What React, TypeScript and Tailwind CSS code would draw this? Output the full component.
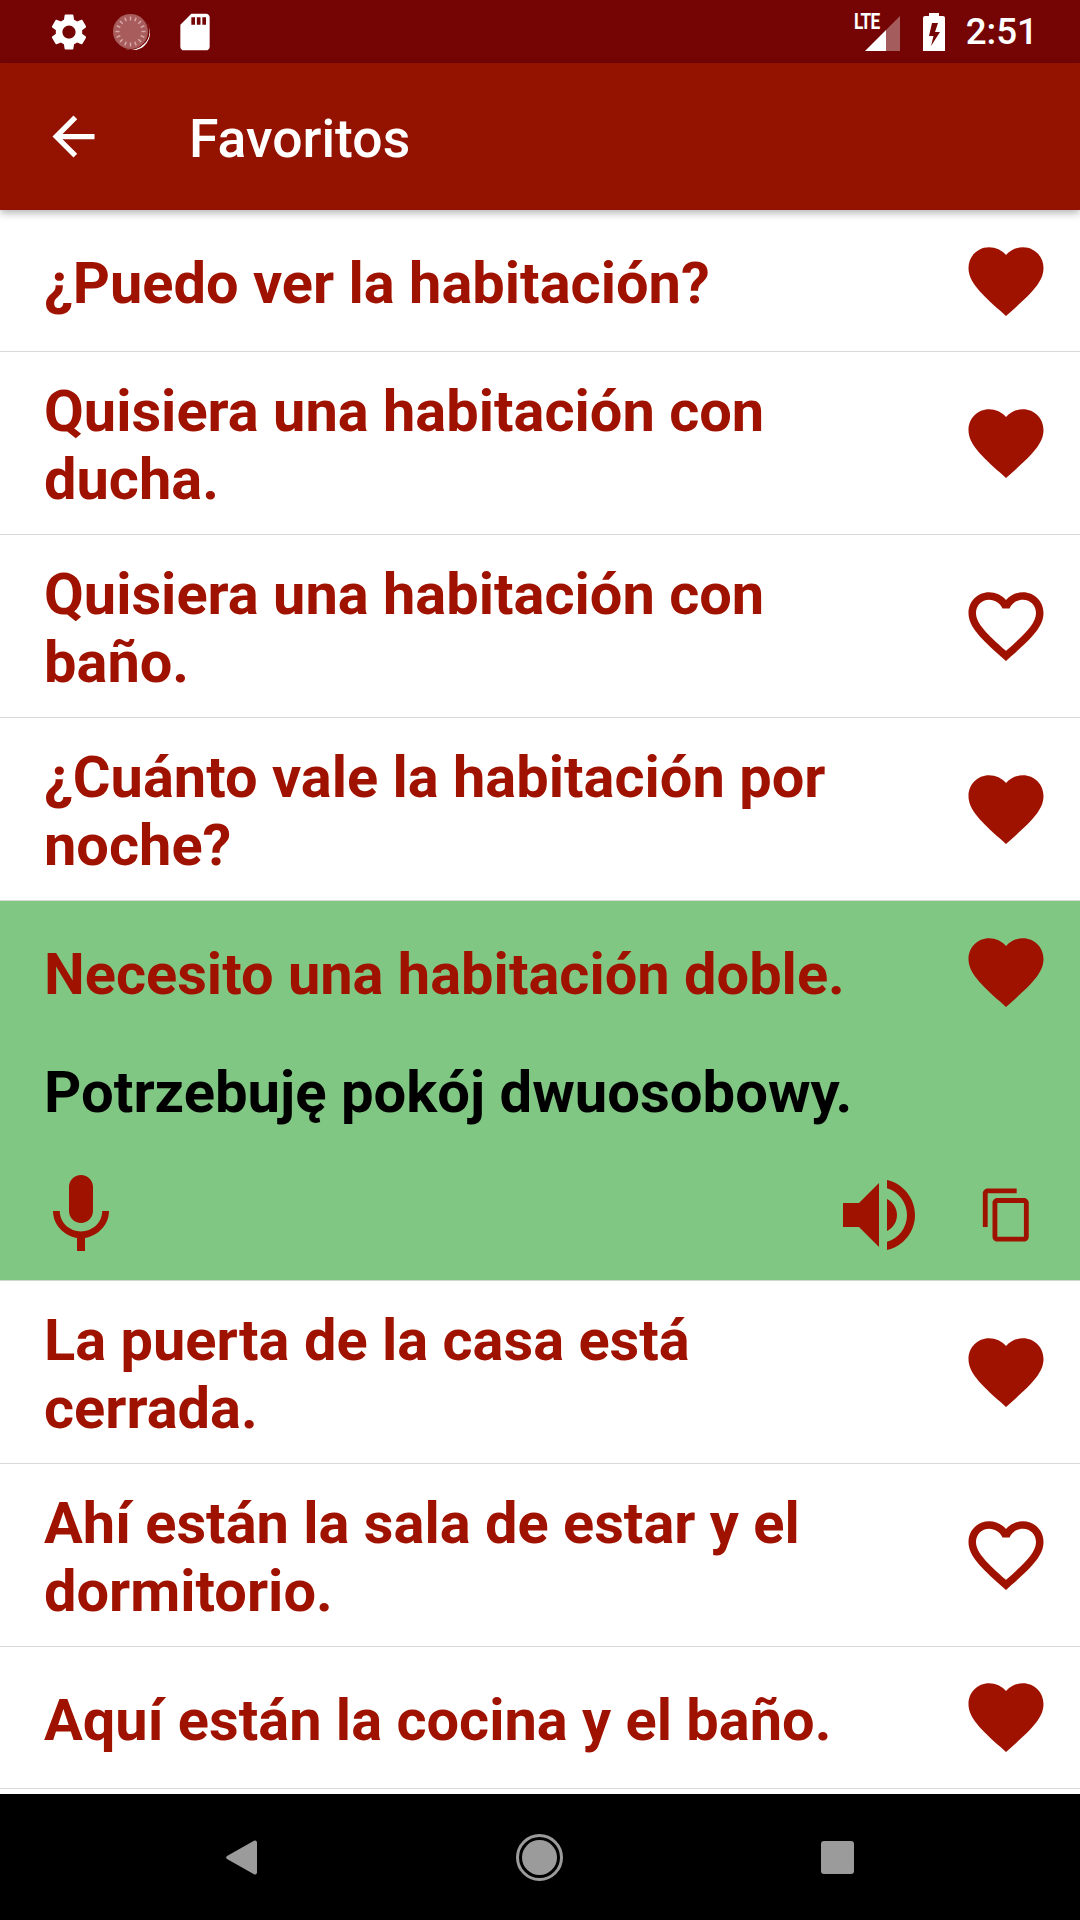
const RED = "#a01200";

const HEART_FULL =
  "M12 21.35l-1.45-1.32C5.4 15.36 2 12.28 2 8.5 2 5.42 4.42 3 7.5 3c1.74 0 3.41.81 4.5 2.09C13.09 3.81 14.76 3 16.5 3 19.58 3 22 5.42 22 8.5c0 3.78-3.4 6.86-8.55 11.54L12 21.35z";
const HEART_EMPTY =
  "M16.5 3c-1.74 0-3.41.81-4.5 2.09C10.91 3.81 9.24 3 7.5 3 4.42 3 2 5.42 2 8.5c0 3.78 3.4 6.86 8.55 11.54L12 21.35l1.45-1.32C18.6 15.36 22 12.28 22 8.5 22 5.42 19.58 3 16.5 3zm-4.4 15.55l-.1.1-.1-.1C7.14 14.24 4 11.39 4 8.5 4 6.5 5.5 5 7.5 5c1.54 0 3.04.99 3.57 2.36h1.87C13.46 5.99 14.96 5 16.5 5c2 0 3.5 1.5 3.5 3.5 0 2.89-3.14 5.74-7.9 10.05z";

const Icon = ({ d, size, fill = RED, className = "" }: { d: string; size: number; fill?: string; className?: string }) => (
  <svg width={size} height={size} viewBox="0 0 24 24" fill={fill} className={`shrink-0 ${className}`}>
    <path d={d} />
  </svg>
);

const Row = ({ text, liked = true }: { text: string; liked?: boolean }) => (
  <div className="flex items-center min-h-[142px] py-[19.9px] pl-[44px] pr-[29px] border-b border-[#d9d9d9] shrink-0">
    <p className="flex-1 pt-[5px] pr-[60px] text-[57.75px] leading-[68.6px] font-bold text-[#a01200]">{text}</p>
    <Icon d={liked ? HEART_FULL : HEART_EMPTY} size={90} />
  </div>
);

const Ticks = () => {
  const lines = [];
  for (let i = 0; i < 16; i++) {
    const a = (i * Math.PI) / 8;
    lines.push(
      <line
        key={i}
        x1={17.5 + Math.cos(a) * 11}
        y1={18.5 + Math.sin(a) * 11}
        x2={17.5 + Math.cos(a) * 15}
        y2={18.5 + Math.sin(a) * 15}
        stroke="#d9a9a9"
        strokeWidth="1.4"
      />
    );
  }
  return (
    <svg width="37" height="37" viewBox="0 0 37 37" className="shrink-0">
      <circle cx="17.5" cy="18.5" r="17.5" fill="#a85c5c" />
      {lines}
      <path d="M33 8a18 18 0 0 1-21 28a18 18 0 0 0 19-5a17 17 0 0 0 2-23z" fill="#fff" />
    </svg>
  );
};

const StatusBar = () => (
  <div className="h-[63px] bg-[#750505] flex items-center shrink-0 text-white">
    <Icon
      size={44}
      fill="#fff"
      className="ml-[46.5px]"
      d="M19.14 12.94c.04-.3.06-.61.06-.94 0-.32-.02-.64-.07-.94l2.03-1.58c.18-.14.23-.41.12-.61l-1.92-3.32c-.12-.22-.37-.29-.59-.22l-2.39.96c-.5-.38-1.03-.7-1.62-.94l-.36-2.54c-.04-.24-.24-.41-.48-.41h-3.84c-.24 0-.43.17-.47.41l-.36 2.54c-.59.24-1.13.57-1.62.94l-2.39-.96c-.22-.08-.47 0-.59.22L2.74 8.87c-.12.21-.08.47.12.61l2.03 1.58c-.05.3-.09.63-.09.94s.02.64.07.94l-2.03 1.58c-.18.14-.23.41-.12.61l1.92 3.32c.12.22.37.29.59.22l2.39-.96c.5.38 1.03.7 1.62.94l.36 2.54c.05.24.24.41.48.41h3.84c.24 0 .44-.17.47-.41l.36-2.54c.59-.24 1.13-.56 1.62-.94l2.39.96c.22.08.47 0 .59-.22l1.92-3.32c.12-.22.07-.47-.12-.61l-2.01-1.58zM12 15.6c-1.98 0-3.6-1.62-3.6-3.6s1.62-3.6 3.6-3.6 3.6 1.62 3.6 3.6-1.62 3.6-3.6 3.6z"
    />
    <div className="ml-[22.5px]">
      <Ticks />
    </div>
    <Icon
      size={44}
      fill="#fff"
      className="ml-[22.5px]"
      d="M18 2h-8L4.02 8 4 20c0 1.1.9 2 2 2h12c1.1 0 2-.9 2-2V4c0-1.1-.9-2-2-2zm-6 6h-2V4h2v4zm3 0h-2V4h2v4zm3 0h-2V4h2v4z"
    />
    <div className="flex-1" />
    <div className="relative w-[46px] h-[38px] shrink-0">
      <svg width="36" height="36" viewBox="0 0 36 36" className="absolute left-[11px] top-[2px]">
        <path d="M0 36L21 15V36z" fill="#fff" />
        <path d="M21 15L35 1V36H21z" fill="#fff" fillOpacity="0.35" />
      </svg>
      <span className="absolute left-0 -top-[3px] text-[22px] leading-[24px] font-bold tracking-[-1px] scale-x-[0.78] origin-left">
        LTE
      </span>
    </div>
    <svg width="22" height="38" viewBox="0 0 22 38" className="ml-[23px] shrink-0">
      <path
        fillRule="evenodd"
        d="M6 0h10v3h4a2 2 0 0 1 2 2v33H0V5a2 2 0 0 1 2-2h4zM9 10L6 23h4.500L8 33l9-14h-5l3-9z"
        fill="#fff"
      />
    </svg>
    <span className="ml-[21px] mr-[42px] text-[36.75px] leading-[40px] font-medium">2:51</span>
  </div>
);

const AppBar = () => (
  <div className="relative z-10 h-[147px] bg-[#931200] flex items-center shrink-0 shadow-[0_3px_8px_rgba(0,0,0,0.3)]">
    <Icon
      size={63}
      fill="#fff"
      className="ml-[42px]"
      d="M20 11H7.83l5.59-5.59L12 4l-8 8 8 8 1.41-1.41L7.83 13H20v-2z"
    />
    <h1 className="ml-[84px] mt-[5px] text-[53.5px] leading-[60px] font-medium text-white">Favoritos</h1>
  </div>
);

const ExpandedRow = () => (
  <div className="h-[380px] bg-[#81c784] flex flex-col shrink-0 border-b border-[#d0d8d0]">
    <div className="flex items-center pl-[44px] pr-[29px] pt-[26.5px]">
      <p className="flex-1 pt-[3px] text-[57.75px] leading-[68.6px] font-bold text-[#a01200]">Necesito una habitación doble.</p>
      <Icon d={HEART_FULL} size={90} />
    </div>
    <p className="pl-[44px] mt-[41px] text-[58px] leading-[68.6px] font-bold text-black">Potrzebuję pokój dwuosobowy.</p>
    <div className="flex items-center mt-[40px] pl-[33px] pr-[44px]">
      <Icon
        size={96}
        d="M12 14c1.66 0 2.99-1.34 2.99-3L15 5c0-1.66-1.34-3-3-3S9 3.34 9 5v6c0 1.66 1.34 3 3 3zm5.3-3c0 3-2.54 5.1-5.3 5.1S6.7 14 6.7 11H5c0 3.41 2.72 6.23 6 6.72V21h2v-3.28c3.28-.48 6-3.3 6-6.72h-1.7z"
      />
      <div className="flex-1" />
      <Icon
        size={96}
        d="M3 9v6h4l5 5V4L7 9H3zm13.5 3c0-1.77-1.02-3.29-2.5-4.03v8.05c1.48-.73 2.5-2.25 2.5-4.02zM14 3.23v2.06c2.89.86 5 3.54 5 6.71s-2.11 5.85-5 6.71v2.06c4.01-.91 7-4.49 7-8.77s-2.99-7.86-7-8.77z"
      />
      <Icon
        size={58}
        className="ml-[51px]"
        d="M16 1H4c-1.1 0-2 .9-2 2v14h2V3h12V1zm3 4H8c-1.1 0-2 .9-2 2v14c0 1.1.9 2 2 2h11c1.1 0 2-.9 2-2V7c0-1.1-.9-2-2-2zm0 16H8V7h11v14z"
      />
    </div>
  </div>
);

const NavBar = () => (
  <div className="h-[126px] bg-black flex items-center justify-center gap-[258px] shrink-0">
    <svg width="31" height="35" viewBox="0 0 31 35" className="-translate-x-[1px]">
      <path d="M28 .8L1 16a2 2 0 0 0 0 3L28 34.200a2 2 0 0 0 3-1.700V2.500a2 2 0 0 0-3-1.700z" fill="#9b9b9b" />
    </svg>
    <div className="w-[47px] h-[47px] rounded-full border-[3px] border-[#9b9b9b] flex items-center justify-center">
      <div className="w-[35px] h-[35px] rounded-full bg-[#9b9b9b]" />
    </div>
    <div className="w-[33px] h-[33px] rounded-[3px] bg-[#9b9b9b]" />
  </div>
);

export default function App() {
  return (
    <div className="w-[1080px] h-[1920px] flex flex-col bg-white overflow-hidden font-['Roboto',sans-serif]">
      <StatusBar />
      <AppBar />
      <div className="flex-1 flex flex-col overflow-hidden">
        <Row text="¿Puedo ver la habitación?" />
        <Row text="Quisiera una habitación con ducha." />
        <Row text="Quisiera una habitación con baño." liked={false} />
        <Row text="¿Cuánto vale la habitación por noche?" />
        <ExpandedRow />
        <Row text="La puerta de la casa está cerrada." />
        <Row text="Ahí están la sala de estar y el dormitorio." liked={false} />
        <Row text="Aquí están la cocina y el baño." />
      </div>
      <NavBar />
    </div>
  );
}
